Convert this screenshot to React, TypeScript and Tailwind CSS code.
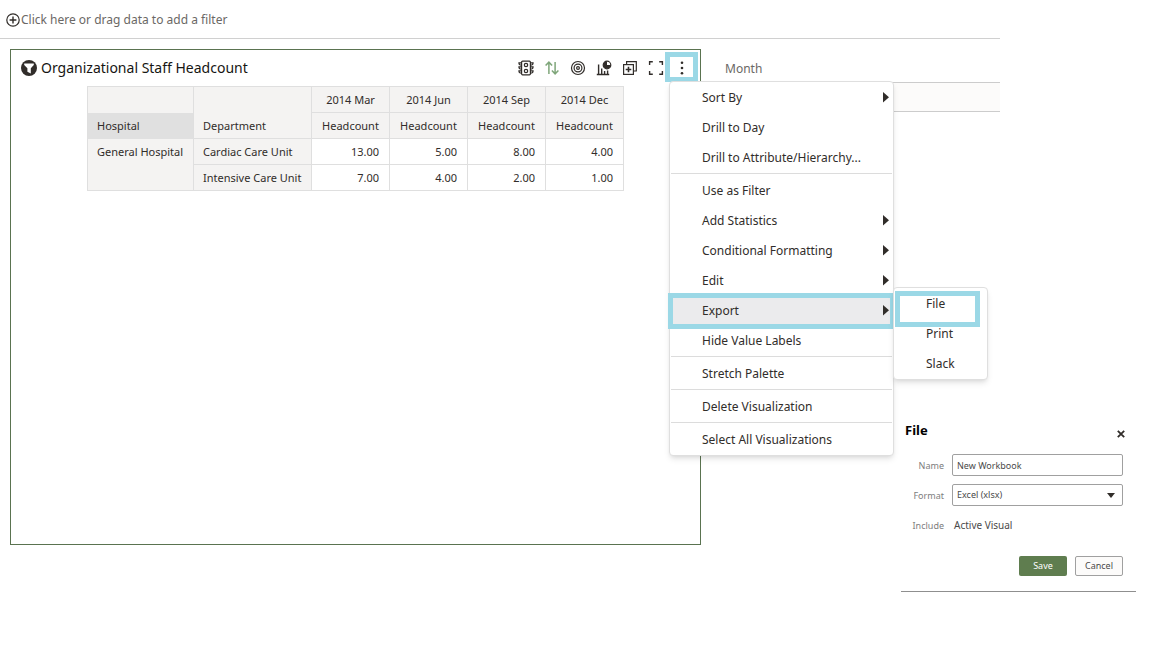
import { useState } from "react";
import type { ReactNode } from "react";

type MenuEntry = {
  label: string;
  arrow?: boolean;
  divider?: boolean;
  highlighted?: boolean;
};

const menuEntries: MenuEntry[] = [
  { label: "Sort By", arrow: true },
  { label: "Drill to Day" },
  { label: "Drill to Attribute/Hierarchy..." },
  { label: "Use as Filter", divider: true },
  { label: "Add Statistics", arrow: true },
  { label: "Conditional Formatting", arrow: true },
  { label: "Edit", arrow: true },
  { label: "Export", arrow: true, highlighted: true },
  { label: "Hide Value Labels" },
  { label: "Stretch Palette", divider: true },
  { label: "Delete Visualization", divider: true },
  { label: "Select All Visualizations", divider: true },
];

const months = ["2014 Mar", "2014 Jun", "2014 Sep", "2014 Dec"];

const rows = [
  { department: "Cardiac Care Unit", values: ["13.00", "5.00", "8.00", "4.00"] },
  { department: "Intensive Care Unit", values: ["7.00", "4.00", "2.00", "1.00"] },
];

const Icon = ({ children }: { children: ReactNode }) => (
  <svg
    width="16"
    height="16"
    viewBox="0 0 16 16"
    fill="none"
    stroke="currentColor"
    strokeWidth="1.2"
    aria-hidden="true"
  >
    {children}
  </svg>
);

const TrafficLightIcon = () => (
  <Icon>
    <rect x="3.6" y="1.2" width="8.8" height="13.6" rx="1" />
    <circle cx="8" cy="5" r="1.7" />
    <circle cx="8" cy="11" r="1.7" />
    <path
      d="M3.5 2.9H.9c0 1.4.8 2.2 2.6 2.3M3.5 6.9H.9c0 1.4.8 2.2 2.6 2.3M3.5 10.9H.9c0 1.4.8 2.2 2.6 2.3M12.5 2.9h2.6c0 1.4-.8 2.2-2.6 2.3M12.5 6.9h2.6c0 1.4-.8 2.2-2.6 2.3M12.5 10.9h2.6c0 1.4-.8 2.2-2.6 2.3"
      strokeWidth="1.1"
    />
  </Icon>
);

const SortIcon = () => (
  <Icon>
    <path d="M4.9 14V2.2M1.6 5.6l3.3-3.4 3.2 3.4M11.1 2v11.8M7.9 10.4l3.2 3.4 3.3-3.4" strokeWidth="1.5" />
  </Icon>
);

const TargetIcon = () => (
  <Icon>
    <circle cx="8" cy="8" r="6.5" />
    <circle cx="8" cy="8" r="3.9" />
    <circle cx="8" cy="8" r="1.4" />
  </Icon>
);

const ChartIcon = () => (
  <Icon>
    <path d="M.8 14.5h12.4M2.6 14V4.5M5.7 14V8.5M8.6 14v-3M11.6 14v-3.5" strokeWidth="1.4" />
    <circle cx="11" cy="5" r="3.8" />
    <path d="M11 1.2A3.8 3.8 0 1 0 14.8 5H11z" fill="currentColor" stroke="none" />
  </Icon>
);

const DuplicateIcon = () => (
  <Icon>
    <path d="M4.6 4.2V1.7h9.7V11h-2.6" />
    <rect x="1.6" y="4.6" width="9.8" height="9.8" />
    <path d="M6.5 6.7v5.6M3.7 9.5h5.6" strokeWidth="1.6" />
  </Icon>
);

const ExpandIcon = () => (
  <Icon>
    <path d="M1.6 5V1.7h3.2M11.2 1.7h3.2V5M14.4 11v3.3h-3.2M4.8 14.3H1.6V11" strokeWidth="1.4" />
  </Icon>
);

const MoreIcon = () => (
  <Icon>
    <g fill="currentColor" stroke="none">
      <circle cx="8" cy="2.8" r="1.3" />
      <circle cx="8" cy="8" r="1.3" />
      <circle cx="8" cy="13.2" r="1.3" />
    </g>
  </Icon>
);

const FunnelIcon = () => (
  <svg width="16" height="16" viewBox="0 0 16 16" aria-hidden="true">
    <circle cx="8" cy="8" r="8" fill="#312d2a" />
    <path d="M3.2 3.4h9.6v1.7L9.8 8.3v5.3L6.4 11.8V8.3L3.2 5.1z" fill="#fff" />
  </svg>
);

const AddFilterIcon = () => (
  <svg width="14" height="14" viewBox="0 0 14 14" fill="none" stroke="#312d2a" aria-hidden="true">
    <circle cx="7" cy="7" r="6.2" strokeWidth="1.2" />
    <path d="M7 3.6v6.8M3.6 7h6.8" strokeWidth="1.4" />
  </svg>
);

const tools = [
  { label: "Conditional formatting", icon: <TrafficLightIcon />, color: "text-[#312d2a]" },
  { label: "Sort", icon: <SortIcon />, color: "text-[#7fa67a]" },
  { label: "Focus", icon: <TargetIcon />, color: "text-[#312d2a]" },
  { label: "Change visualization", icon: <ChartIcon />, color: "text-[#312d2a]" },
  { label: "Duplicate", icon: <DuplicateIcon />, color: "text-[#312d2a]" },
  { label: "Maximize", icon: <ExpandIcon />, color: "text-[#312d2a]" },
];

const ExportMenu = () => (
  <ul className="absolute left-full -top-[9px] w-[95px] rounded-sm border border-[#dfdfdf] bg-white pt-px shadow-md">
    {["File", "Print", "Slack"].map((label) => (
      <li key={label} className="relative">
        {label === "File" && (
          <span className="absolute left-px top-0.5 h-9 w-[85px] border-5 border-[#9bd8e6]" />
        )}
        <button className="relative flex h-[30px] w-full items-center pl-8">{label}</button>
      </li>
    ))}
  </ul>
);

const ContextMenu = () => (
  <ul className="absolute left-1 top-[29px] z-10 w-[225px] rounded-sm border border-[#dfdfdf] bg-white pt-px text-[#312d2a] shadow-md">
    {menuEntries.map(({ label, arrow, divider, highlighted }) => (
      <li key={label}>
        {divider && <div className="mx-px mb-0.5 border-t border-[#dcdcdc]" />}
        <div className="relative">
          <button
            className={`flex h-[30px] w-full items-center justify-between pl-8 pr-1 ${
              highlighted ? "bg-[#ebebed]" : ""
            }`}
          >
            {label}
            {arrow && (
              <svg width="6" height="12" viewBox="0 0 6 12" aria-hidden="true">
                <path d="M0 0 6 5.2 0 10.4z" fill="#312d2a" />
              </svg>
            )}
          </button>
          {highlighted && (
            <>
              <span className="pointer-events-none absolute -inset-x-0.5 -inset-y-[3px] border-5 border-[#9bd8e6]" />
              <ExportMenu />
            </>
          )}
        </div>
      </li>
    ))}
  </ul>
);

const HeadcountTable = () => (
  <table className="mx-auto border-collapse border border-[#dfdfdf] text-[11px] leading-4 text-[#312d2a]">
    <thead className="bg-[#f4f3f2]">
      <tr className="h-[26px]">
        <td className="w-[106px] border-r border-[#dfdfdf]" />
        <th
          rowSpan={2}
          className="w-[118px] border border-[#dfdfdf] px-[9px] pb-1 text-left align-bottom font-normal"
        >
          Department
        </th>
        {months.map((month) => (
          <th key={month} className="w-[78px] border border-[#dfdfdf] pt-px font-normal">
            {month}
          </th>
        ))}
      </tr>
      <tr className="h-[26px]">
        <th className="bg-[#e0e0e0] px-[9px] pt-px text-left font-normal">Hospital</th>
        {months.map((month) => (
          <th key={month} className="border border-[#dfdfdf] pt-px font-normal">
            Headcount
          </th>
        ))}
      </tr>
    </thead>
    <tbody>
      {rows.map(({ department, values }, index) => (
        <tr key={department} className="h-[26px]">
          {index === 0 && (
            <th
              rowSpan={2}
              className="whitespace-nowrap border-r border-[#dfdfdf] bg-[#f4f3f2] px-[9px] pt-[5px] text-left align-top font-normal"
            >
              General Hospital
            </th>
          )}
          <th className="whitespace-nowrap border border-[#dfdfdf] bg-[#f4f3f2] px-[9px] pt-px text-left font-normal">
            {department}
          </th>
          {values.map((value, i) => (
            <td key={months[i]} className="border border-[#dfdfdf] pr-2.5 pt-px text-right">
              {value}
            </td>
          ))}
        </tr>
      ))}
    </tbody>
  </table>
);

const FileDialog = () => {
  const [name, setName] = useState("New Workbook");
  return (
    <form
      className="absolute bottom-14 right-4 w-[235px] border-b border-[#8f8f8f] pb-[15px] pl-1 pr-[13px] text-[9px] text-[#4a4a4a]"
      onSubmit={(e) => e.preventDefault()}
    >
      <div className="flex items-start justify-between">
        <h2 className="text-[13px] font-bold leading-4 text-black">File</h2>
        <button type="button" aria-label="Close" className="-mr-0.5 mt-2">
          <svg width="8" height="8" viewBox="0 0 8 8" stroke="#312d2a" strokeWidth="1.8">
            <path d="M.8.8l6.4 6.4M7.2.8.8 7.2" />
          </svg>
        </button>
      </div>
      <div className="mt-4 grid grid-cols-[39px_1fr] items-center gap-x-2 gap-y-2">
        <label htmlFor="file-name" className="pt-0.5 text-right text-[#7d7d7d]">
          Name
        </label>
        <input
          id="file-name"
          value={name}
          onChange={(e) => setName(e.target.value)}
          className="h-[22px] w-full rounded-xs border border-[#a0a0a0] px-1"
        />
        <label htmlFor="file-format" className="pt-0.5 text-right text-[#7d7d7d]">
          Format
        </label>
        <div className="relative">
          <select
            id="file-format"
            className="block h-[22px] w-full appearance-none rounded-xs border border-[#a0a0a0] px-1"
          >
            <option>Excel (xlsx)</option>
          </select>
          <svg
            width="8"
            height="5"
            viewBox="0 0 8 5"
            className="pointer-events-none absolute right-2 top-[9px]"
            aria-hidden="true"
          >
            <path d="M0 0h8L4 5z" fill="#312d2a" />
          </svg>
        </div>
        <span className="text-right leading-6 text-[#7d7d7d]">Include</span>
        <span className="pl-0.5 text-[10px]">Active Visual</span>
      </div>
      <div className="mt-[18px] flex justify-end gap-2">
        <button className="h-5 w-12 rounded-xs bg-[#5f7d4f] text-white">Save</button>
        <button type="button" className="h-5 w-12 rounded-xs border border-[#a0a0a0] bg-[#fcfbfa]">
          Cancel
        </button>
      </div>
    </form>
  );
};

export default function App() {
  return (
    <div className="relative min-h-screen bg-white font-['Noto_Sans','Open_Sans',sans-serif] text-xs">
      <div className="mr-38">
        <button className="flex h-[39px] w-full items-center gap-px border-b border-[#d0d0d0] pl-1.5 pt-0.5 text-[#6b6865]">
          <AddFilterIcon />
          Click here or drag data to add a filter
        </button>
        <main className="flex pl-2.5 pt-2.5">
          <section className="min-h-[calc(100vh-152px)] flex-1 border border-[#5a7350]">
            <header className="flex items-center justify-between pl-2.5 pr-0.5 pt-0.5">
              <div className="flex items-center gap-1 pt-0.5">
                <FunnelIcon />
                <h1 className="text-sm leading-5 text-[#161513]">Organizational Staff Headcount</h1>
              </div>
              <div className="flex items-center">
                <div className="flex gap-2.5 pt-0.5">
                  {tools.map(({ label, icon, color }) => (
                    <button key={label} aria-label={label} className={color}>
                      {icon}
                    </button>
                  ))}
                </div>
                <div className="relative ml-px">
                  <button
                    aria-label="More"
                    className="flex h-[30px] w-[33px] items-center justify-center border-5 border-[#9bd8e6] pt-0.5 text-[#312d2a]"
                  >
                    <MoreIcon />
                  </button>
                  <ContextMenu />
                </div>
              </div>
            </header>
            <div className="pt-1">
              <HeadcountTable />
            </div>
          </section>
          <section className="w-[299px] pl-6 pt-3">
            <h2 className="text-[#6b6865]">Month</h2>
            <div className="mt-[5px] h-[30px] border-y border-[#cccccc] bg-[#fcfbfa]" />
          </section>
        </main>
      </div>
      <FileDialog />
    </div>
  );
}
